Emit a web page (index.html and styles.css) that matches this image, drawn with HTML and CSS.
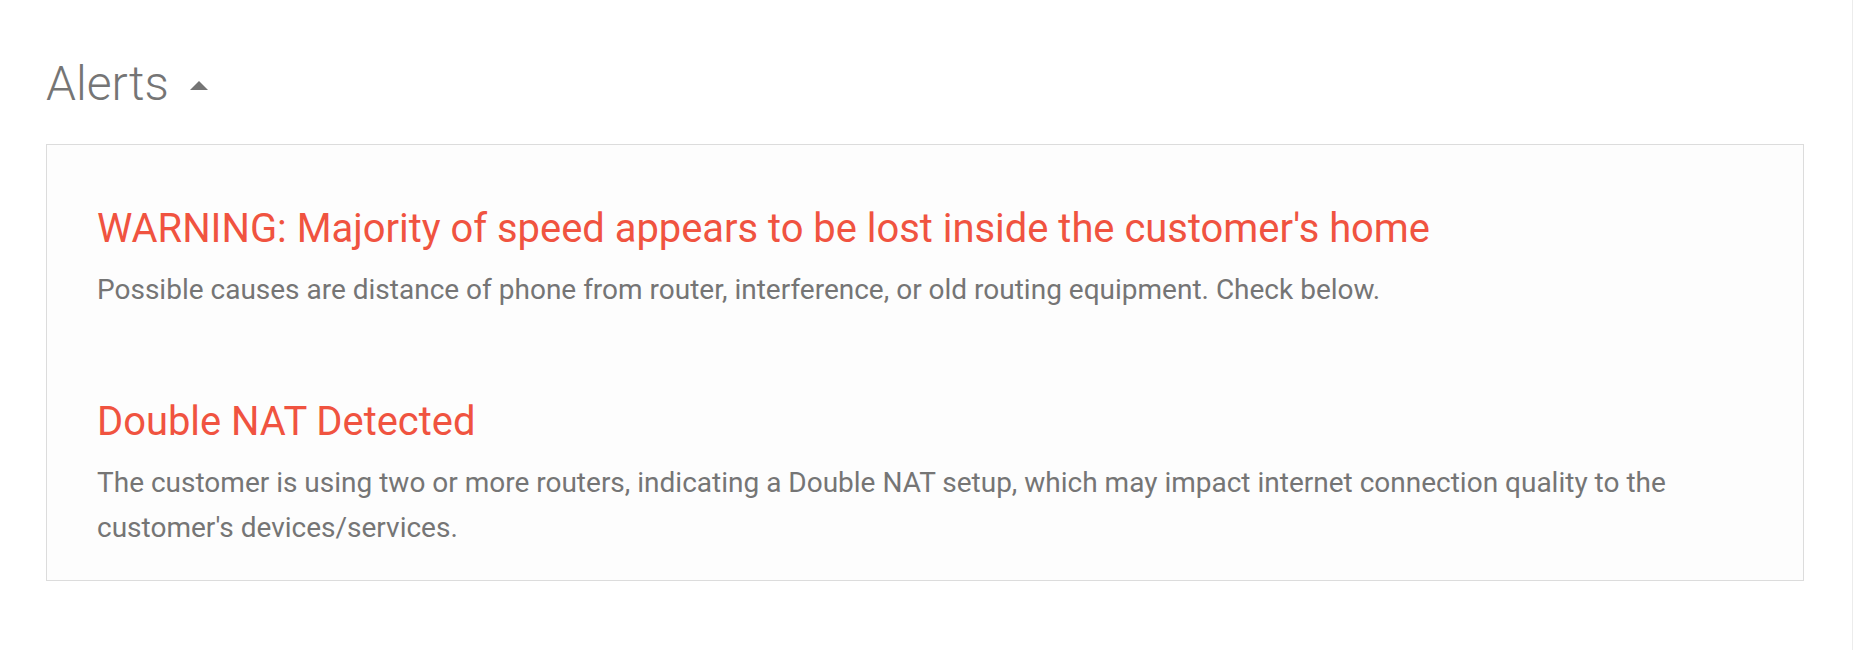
FILE: index.html
```html
<!DOCTYPE html>
<html lang="en">
<head>
<meta charset="utf-8">
<title>Alerts</title>
<link rel="stylesheet" href="styles.css">
</head>
<body>
<div class="page">
  <section class="alerts">
    <h2 class="alerts-title">Alerts <span class="caret" aria-hidden="true"></span></h2>
    <div class="alerts-box">
      <div class="alert">
        <h3 class="alert-title">WARNING: Majority of speed appears to be lost inside the customer's home</h3>
        <p class="alert-text">Possible causes are distance of phone from router, interference, or old routing equipment. Check below.</p>
      </div>
      <div class="alert">
        <h3 class="alert-title">Double NAT Detected</h3>
        <p class="alert-text">The customer is using two or more routers, indicating a Double NAT setup, which may impact internet connection quality to the customer's devices/services.</p>
      </div>
    </div>
  </section>
</div>
</body>
</html>
```

FILE: styles.css
```css
html, body {
  margin: 0;
  padding: 0;
  background: #ffffff;
}

body {
  font-family: Roboto, "Liberation Sans", Arial, sans-serif;
}

.page {
  height: 650px;
  box-sizing: border-box;
  border-right: 1px solid #ececec;
  width: 1853px;
  padding-top: 56px;
}

.alerts {
  padding-left: 46px;
  width: 1758px;
}

.alerts-title {
  margin: 0;
  font-size: 48px;
  line-height: 56px;
  font-weight: 300;
  color: #757575;
  display: flex;
  align-items: center;
}

.caret {
  display: inline-block;
  width: 0;
  height: 0;
  margin-left: 21px;
  margin-top: 2px;
  border-left: 9px solid transparent;
  border-right: 9px solid transparent;
  border-bottom: 9px solid #757575;
}

.alerts-box {
  margin-top: 32px;
  border: 1px solid #dcdcdc;
  background: #fdfdfd;
  padding: 60px 50px 30px 50px;
  display: flex;
  flex-direction: column;
  gap: 86px;
}

.alert-title {
  margin: 0;
  font-size: 39.9px;
  line-height: 48px;
  font-weight: 400;
  color: #f05340;
}

.alert-text {
  margin: 14px 0 0;
  font-size: 28px;
  line-height: 45px;
  color: #757575;
}
```
